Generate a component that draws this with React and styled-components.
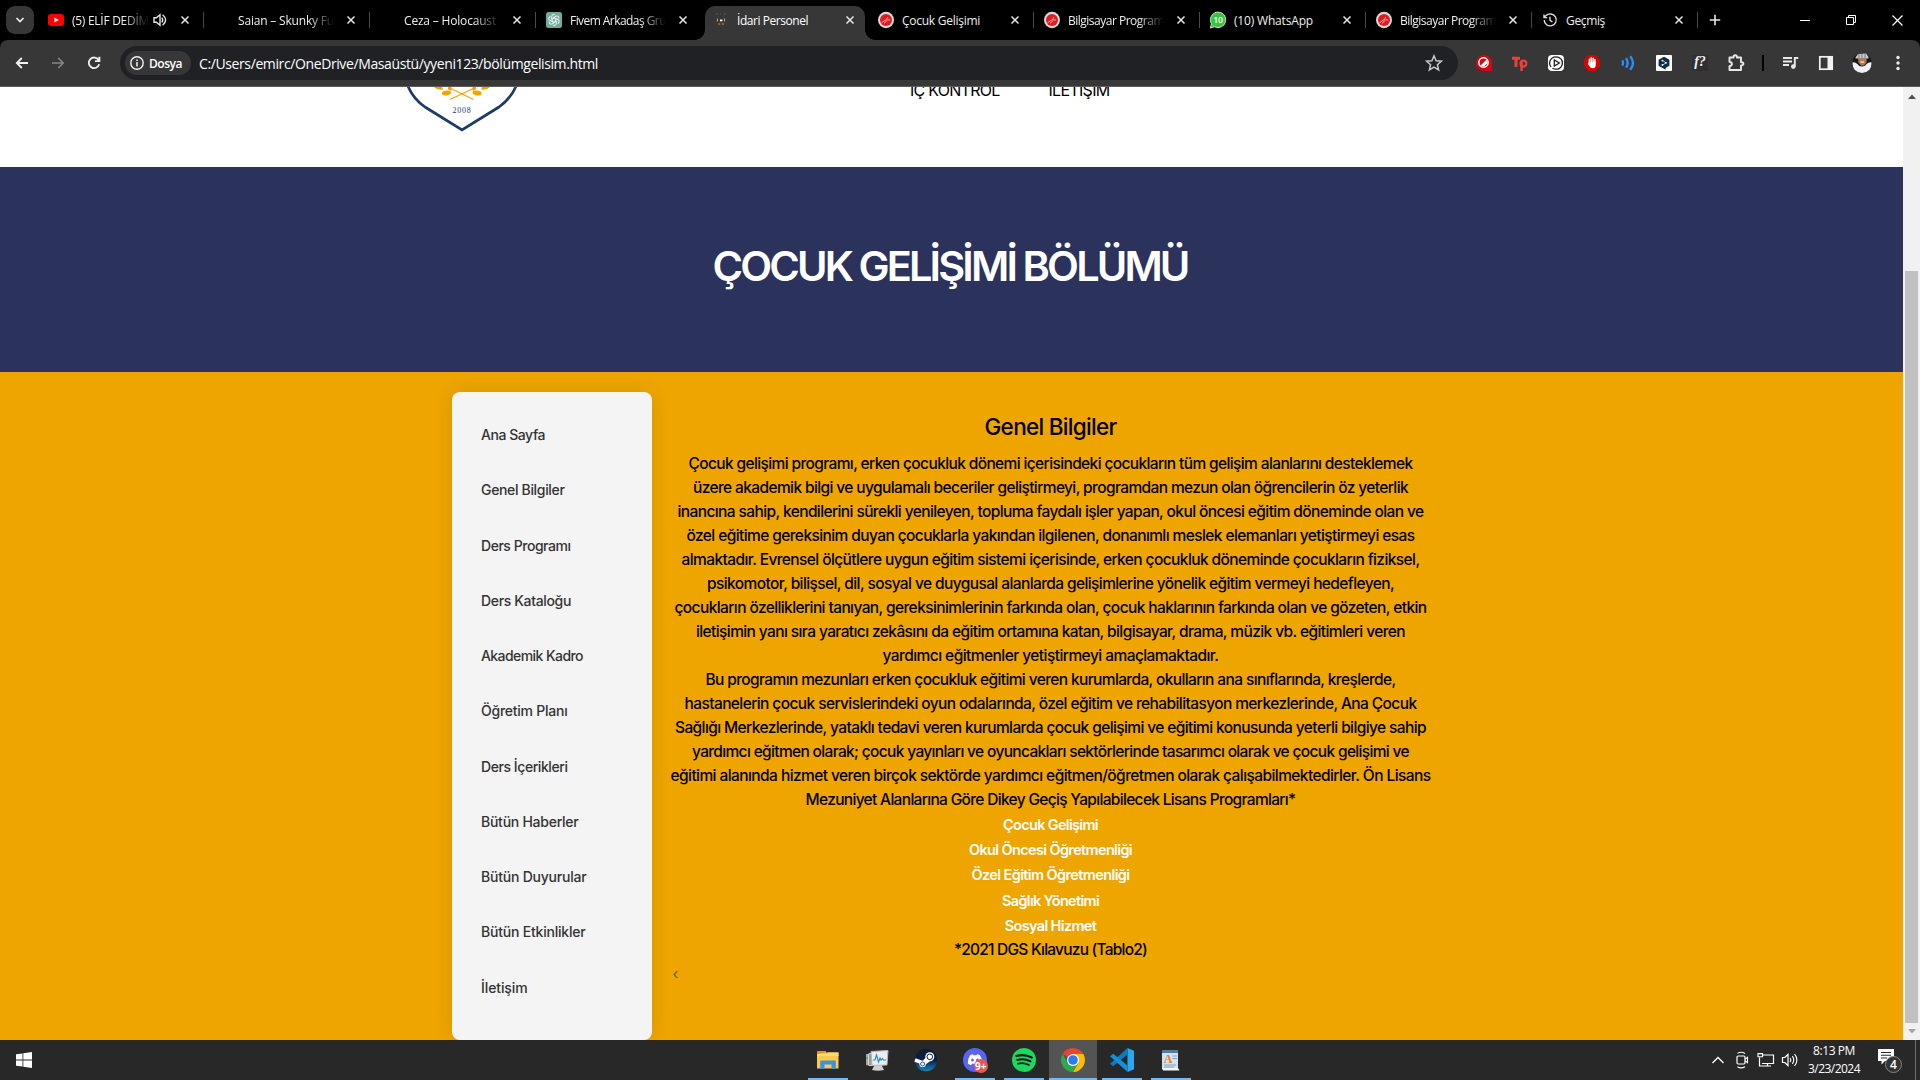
import React, { useLayoutEffect, useRef } from "react";
import styled, { createGlobalStyle, css } from "styled-components";

const ui = `"Open Sans", "Noto Sans", sans-serif`;
const body = `Inter, "Noto Sans", sans-serif`;

const Global = createGlobalStyle`
  * { box-sizing: border-box; }
  html, body { margin: 0; padding: 0; height: 100%; overflow: hidden; }
  body { font-family: ${ui}; background: #000; }
  svg { display: block; flex: none; }
`;

/* ---------- text that tracks itself to a given measure ---------- */
const FitSpan = styled.span`
  display: block;
  flex: none;
  width: max-content;
  white-space: nowrap;
`;

function Fit({ w, children }) {
  const ref = useRef(null);
  useLayoutEffect(() => {
    const el = ref.current;
    el.style.letterSpacing = "0px";
    const natural = el.getBoundingClientRect().width;
    el.style.letterSpacing = `${(w - natural) / el.textContent.length}px`;
  }, [w, children]);
  return <FitSpan ref={ref}>{children}</FitSpan>;
}

/* ---------- window ---------- */
const Window = styled.div`
  width: 1920px;
  height: 1080px;
  display: flex;
  flex-direction: column;
  overflow: hidden;
`;

const TabStrip = styled.div`
  height: 40px;
  flex: none;
  display: flex;
  background: #000;
  color: #e8e8e8;
`;

const TabSearch = styled.div`
  width: 28px;
  height: 28px;
  margin: 6px 4px 0 6px;
  border-radius: 9px;
  background: #373737;
  display: grid;
  place-items: center;
`;

const TabBox = styled.div`
  width: 166px;
  height: 40px;
  display: flex;
  align-items: center;
  padding: 0 0 0 10px;
  font-size: 12px;
  color: #efefef;
  ${(p) =>
    p.$active &&
    css`
      position: relative;
      width: 160px;
      height: 34px;
      margin: 6px 3px 0;
      padding: 0 0 6px 8px;
      background: #373737;
      border-radius: 10px 10px 0 0;
      color: #fff;
      &::before,
      &::after {
        content: "";
        position: absolute;
        bottom: 0;
        width: 10px;
        height: 10px;
      }
      &::before {
        left: -10px;
        background: radial-gradient(circle at 0 0, transparent 9.5px, #373737 10px);
      }
      &::after {
        right: -10px;
        background: radial-gradient(circle at 100% 0, transparent 9.5px, #373737 10px);
      }
    `}
`;

const Favicon = styled.div`
  width: 16px;
  height: 18px;
  display: grid;
  place-items: center;
  margin-right: 8px;
  flex: none;
`;

const TabLabel = styled.div`
  width: ${(p) => (p.$short ? 77 : 96)}px;
  flex: none;
  overflow: hidden;
  line-height: 20px;
  padding-top: 1px;
  ${(p) =>
    p.$fade && css`mask-image: linear-gradient(90deg, #000 calc(100% - 26px), transparent 100%);`}
`;

const SoundSlot = styled.div`
  width: 19px;
  display: grid;
  place-items: center;
  padding-left: 3px;
`;

const CloseSlot = styled.div`
  width: 16px;
  flex: none;
  margin: 0 10px 0 9px;
  display: grid;
  place-items: center;
`;

const Separator = styled.div`
  width: 1px;
  height: 16px;
  background: ${(p) => (p.$hidden ? "transparent" : "#4a4a4a")};
`;

const NewTab = styled.div`
  width: 34px;
  display: grid;
  place-items: center;
`;

const WindowControls = styled.div`
  margin-left: auto;
  display: flex;
`;

const ControlButton = styled.div`
  width: 46px;
  height: 40px;
  display: grid;
  place-items: center;
`;

const Toolbar = styled.div`
  height: 47px;
  flex: none;
  display: flex;
  align-items: center;
  padding-left: 4px;
  background: #373737;
  border-bottom: 1px solid #5c5c5c;
  border-radius: 8px 8px 0 0;
`;

const NavButton = styled.div`
  width: 36px;
  display: grid;
  place-items: center;
`;

const Omnibox = styled.div`
  width: 1338px;
  height: 34px;
  margin-left: 8px;
  padding: 0 15px 0 5px;
  border-radius: 17px;
  background: #202124;
  color: #fff;
  display: flex;
  align-items: center;
  font-size: 14px;
`;

const Chip = styled.div`
  width: 66px;
  height: 24px;
  margin-right: 8px;
  padding-left: 5px;
  gap: 5px;
  border-radius: 12px;
  background: #373737;
  display: flex;
  align-items: center;
  font-size: 12px;
  font-weight: 600;
`;

const StarSlot = styled.div`
  margin-left: auto;
`;

const Extensions = styled.div`
  display: flex;
  align-items: center;
  margin-left: 8px;
`;

const Extension = styled.div`
  width: 36px;
  height: 24px;
  display: grid;
  place-items: center;
`;

const ToolbarDivider = styled.div`
  width: 2px;
  height: 16px;
  margin: 0 8px 0 8px;
  background: #000;
`;

/* ---------- page ---------- */
const Viewport = styled.div`
  height: 953px;
  flex: none;
  display: flex;
`;

const Page = styled.div`
  width: 1903px;
  font-family: ${body};
  background: #eea500;
  display: flex;
  flex-direction: column;
`;

const SiteHeader = styled.header`
  height: 80px;
  flex: none;
  overflow: hidden;
  background: #fff;
  display: flex;
  padding-left: 406px;
`;

const SiteNav = styled.nav`
  display: flex;
  align-items: center;
  gap: 49px;
  height: 24px;
  margin: -9px 0 0 392px;
  font-size: 16px;
  line-height: 24px;
  color: #000;
`;

const Banner = styled.section`
  height: 205px;
  flex: none;
  background: #2b325c;
  display: flex;
  align-items: center;
  justify-content: center;
  padding: 0 3px 7px 0;
`;

const BannerTitle = styled.h1`
  margin: 0;
  font-size: 41.5px;
  font-weight: 600;
  line-height: 50px;
  color: #fff;
`;

const Content = styled.div`
  width: 1000px;
  flex: 1;
  margin: 0 auto;
  display: flex;
`;

const Sidebar = styled.aside`
  width: 200px;
  height: 648px;
  flex: none;
  margin-top: 20px;
  padding: 15px 0 0 29.5px;
  border-radius: 8px;
  background: #f4f4f4;
  box-shadow: 0 0 20px rgba(0, 0, 0, 0.1);
`;

const SideLink = styled.a`
  height: 55.25px;
  display: flex;
  align-items: center;
  font-size: 14px;
  font-weight: 450;
  color: #333;
`;

const Article = styled.main`
  width: 800px;
  padding: 40px 21px 0 19px;
  display: flex;
  flex-direction: column;
  align-items: center;
`;

const ArticleTitle = styled.h2`
  margin: 0 0 11px;
  font-size: 22.5px;
  line-height: 29px;
  font-weight: 500;
  color: #000;
`;

const Line = styled.div`
  height: 24px;
  font-size: 15.5px;
  font-weight: 450;
  line-height: 24px;
  color: #000;
`;

const Program = styled.div`
  height: 25.2px;
  font-size: 14.5px;
  line-height: 25.2px;
  font-weight: 600;
  color: #fff;
`;

const PrevMark = styled.div`
  align-self: flex-start;
  margin: 1px 0 0 2px;
  font-size: 15px;
  line-height: 22px;
  color: #6b6250;
`;

const Scrollbar = styled.div`
  width: 17px;
  background: #f1f1f1;
  display: flex;
  flex-direction: column;
  align-items: center;
  padding: 7px 0 6px;
`;

const Thumb = styled.div`
  width: 13px;
  height: 752px;
  margin-top: 172px;
  margin-bottom: auto;
  background: #c1c1c1;
`;

/* ---------- taskbar ---------- */
const Taskbar = styled.div`
  height: 40px;
  flex: none;
  display: flex;
  background: #282828;
  color: #fff;
`;

const StartButton = styled.div`
  width: 48px;
  display: grid;
  place-items: center;
  margin-right: 756px;
`;

const AppSlot = styled.div`
  width: 48px;
  margin-right: 1px;
  display: flex;
  flex-direction: column;
  align-items: center;
  justify-content: space-between;
  padding-top: 8px;
  background: ${(p) => (p.$active ? "#545454" : "transparent")};
`;

const Underline = styled.div`
  width: ${(p) => (p.$state === "active" ? 48 : 40)}px;
  height: 2px;
  background: ${(p) => (p.$state ? "#76b9ed" : "transparent")};
`;

const Tray = styled.div`
  margin-left: auto;
  display: flex;
  align-items: center;
`;

const TrayIcon = styled.div`
  width: 24px;
  display: grid;
  place-items: center;
`;

const Clock = styled.div`
  width: 64px;
  display: flex;
  flex-direction: column;
  align-items: center;
  font-size: 12px;
  line-height: 18px;
`;

const Notifications = styled.div`
  width: 49px;
  padding: 2px 0 0 11px;
`;

const ShowDesktop = styled.div`
  width: 5px;
  height: 40px;
  border-left: 1px solid #6d6d6d;
`;

/* ---------- icons ---------- */
const Svg = ({ s = 16, w, h, v, children }) => (
  <svg width={w || s} height={h || s} viewBox={v || `0 0 ${w || s} ${h || s}`} fill="none">
    {children}
  </svg>
);

const CloseX = () => (
  <Svg s={10}>
    <path d="M1.5 1.5l7 7M8.5 1.5l-7 7" stroke="#e6e6e6" strokeWidth="1.5" />
  </Svg>
);

const YouTube = () => (
  <Svg w={16} h={12}>
    <rect width="16" height="12" rx="3" fill="#f00" />
    <path d="M6.4 3.4v5.2L10.8 6z" fill="#fff" />
  </Svg>
);

const ChatGpt = () => (
  <Svg s={16}>
    <rect width="16" height="16" rx="2.5" fill="#74aa9c" />
    {[0, 60, 120, 180, 240, 300].map((a) => (
      <path
        key={a}
        d="M8 5.9L5.7 7.2V4.3C5.7 2.6 8 1.9 9.2 3.1"
        stroke="#fff"
        strokeWidth="0.9"
        transform={`rotate(${a} 8 8)`}
      />
    ))}
  </Svg>
);

const Crest = () => (
  <Svg s={16}>
    <path d="M3 2h2M7 2h1M11 2h2" stroke="#3a6ca8" strokeWidth=".8" />
    <path d="M4 4h1.5M10 4h1.500" stroke="#28415f" />
    <path d="M4.500 6.500v3M11.500 6.500v3" stroke="#f0a21a" strokeWidth="1" />
    <path d="M7 8.400h2.400" stroke="#fff" strokeWidth="1.800" />
    <path d="M5.400 12h1.800M8.800 12h2" stroke="#f0a21a" strokeWidth="1.200" />
    <path d="M2.500 8v2M13.500 8v2M7 14h2" stroke="#28415f" />
  </Svg>
);

const RedSeal = () => (
  <Svg w={16} h={18}>
    <ellipse cx="8" cy="9" rx="8" ry="8.200" fill="#d9d9d9" />
    <circle cx="8" cy="9" r="6" fill="#e01b22" />
    <path d="M3.6 11.6l5-3.2 1.2-2.2M6 12.4l3.8-3.6 2.4.2" stroke="#fff" strokeOpacity=".75" strokeWidth=".8" />
  </Svg>
);

const BadgeText = styled.text`
  font-family: ${ui};
  font-weight: ${(p) => p.$weight || 600};
  font-size: ${(p) => p.$size}px;
  text-anchor: middle;
  fill: #fff;
`;

const WhatsApp = () => (
  <Svg w={16} h={18}>
    <path d="M8 1a7.8 7.8 0 1 1-3.4 14.8L.4 17l1-4.2A7.9 7.9 0 0 1 8 1z" fill="#3bc43f" stroke="#eaffea" strokeWidth=".8" />
    <BadgeText x="8" y="12" $size={8.5}>10</BadgeText>
  </Svg>
);

const History = () => (
  <Svg s={16}>
    <path d="M2.2 8A6 6 0 1 0 4 3.6L2.2 5.4M2 2.4v3.2h3.2M8 4.8V8.4l2.4 1.4" stroke="#ddd" strokeWidth="1.4" />
  </Svg>
);

const Sound = () => (
  <Svg s={14}>
    <path d="M1 4.800h2.400L7 1.800v10.400l-3.600-3H1z" stroke="#e6e6e6" strokeWidth="1.400" />
    <path d="M8.800 4.600q1.800 2.400 0 4.800M9.600 1.800q6 5.200 0 10.400" stroke="#e6e6e6" strokeWidth="1.400" />
  </Svg>
);

const ShieldLogo = () => (
  <svg width="112" height="48" viewBox="406 87 112 48" fill="none">
    <path d="M407.500 85C411 94 417 101.500 425 107L462 130L499 107C507 101.500 513 94 516.500 85" stroke="#1e3a66" strokeWidth="2.700" />
    <path d="M450 99.500L467 91.500L473 88.500M473.500 99.500L457 91.500L451 88.500" stroke="#f0a500" strokeWidth="1.100" />
    <ellipse cx="446.500" cy="93" rx="4.600" ry="2.400" transform="rotate(-8 446.500 93)" fill="#f0a500" />
    <ellipse cx="477" cy="93" rx="4.600" ry="2.400" transform="rotate(8 477 93)" fill="#f0a500" />
    <path d="M434 87h8l1 2.500q-6 1-9-2.500zM448 87h3.500v3.500q-4 .5-3.500-3.500zM490 87h-8l-1 2.500q6 1 9-2.500zM476 87h-3.500v3.500q4 .5 3.500-3.500z" fill="#f0a500" />
    <text x="462" y="112.500" fontFamily="Liberation Serif, serif" fontSize="8" letterSpacing="0.8" textAnchor="middle" fill="#1e3a66">2008</text>
  </svg>
);

const ExtRed = () => (
  <Svg s={16}>
    <path d="M8 0a8 8 0 0 1 8 8v8H8A8 8 0 0 1 8 0z" fill="#d40511" />
    <circle cx="7.500" cy="7.500" r="5.400" fill="#fff" />
    <circle cx="7.500" cy="7.500" r="3.900" fill="#d40511" />
    <path d="M4.600 10.600L10.600 4.400 11.600 8 8 11.600z" fill="#fff" />
  </Svg>
);

const ExtTp = () => (
  <Svg w={18} h={16}>
    <path d="M1 3.200h8M5 3v9" stroke="#f23d3d" strokeWidth="3" />
    <path d="M10.600 16V7" stroke="#f23d3d" strokeWidth="2.500" />
    <circle cx="12.400" cy="8.600" r="2.900" stroke="#f23d3d" strokeWidth="2.200" />
  </Svg>
);

const ExtPlay = () => (
  <Svg s={16}>
    <rect width="16" height="16" rx="4" fill="#fff" />
    <path d="M3 12A6.300 6.300 0 0 1 8 1.800q3 0 4.800 2M13 4a6.300 6.300 0 0 1-5 10.200q-2 0-3.600-1" stroke="#222" strokeWidth="1.300" />
    <path d="M6.300 5v6l5-3z" stroke="#222" strokeWidth="1.300" />
  </Svg>
);

const ExtHand = () => (
  <Svg s={16}>
    <path d="M4.700 0h6.600L16 4.700v6.600L11.300 16H4.700L0 11.300V4.700z" fill="#d90000" />
    <path d="M5.400 8V4.300M7.200 7V2.800M9.100 7V3.200M10.900 8V4.600" stroke="#fff" strokeWidth="1.500" strokeLinecap="round" />
    <path d="M4.700 7h7v3.200q0 3-3.200 3-1.600 0-2.400-1.300L3.800 9z" fill="#fff" />
  </Svg>
);

const ExtWaves = () => (
  <Svg w={14} h={16}>
    <path d="M1.200 5.500q1.800 2.400 0 5M5 3.300q3.400 4.600 0 9.400M9.200 1.200q5.600 6.800 0 13.600" stroke="#2f8cff" strokeWidth="2.300" />
  </Svg>
);

const ExtHex = () => (
  <Svg s={16}>
    <rect width="16" height="16" rx="1" fill="#fff" />
    <path d="M8 1.800l5.400 3v6L9.600 13v1.800L6.400 13l-3.800-2.200v-6z" fill="#0f2b46" />
    <path d="M6.400 5.400l3.600 2.400-3.600 2.400" stroke="#fff" strokeWidth=".7" />
    <circle cx="6.400" cy="5.600" r=".9" fill="#fff" />
    <circle cx="10" cy="7.800" r=".9" fill="#fff" />
    <circle cx="6.400" cy="10" r=".9" fill="#fff" />
  </Svg>
);

const ExtFont = styled.span`
  width: 16px;
  height: 16px;
  background: #303030;
  color: #f2f2f2;
  font: italic bold 14px/14px "Liberation Serif", serif;
  text-align: center;
  white-space: nowrap;
`;

const Puzzle = () => (
  <Svg s={18}>
    <path d="M2.500 3.500h4V3a1.700 1.700 0 0 1 3.400 0v.5H14v4.700h.8a1.600 1.600 0 0 1 0 3.200H14V16H2.500v-3.800q2.400-.4 2.400-2.200t-2.400-2.200z" stroke="#e8e8e8" strokeWidth="1.900" strokeLinejoin="round" />
  </Svg>
);

const MusicQueue = () => (
  <Svg w={18} h={14}>
    <path d="M2 2h9M2 5.500h9M2 9h6" stroke="#e8e8e8" strokeWidth="1.800" />
    <path d="M13.800 10.500V2h3.400" stroke="#e8e8e8" strokeWidth="1.900" />
    <circle cx="12.300" cy="10.600" r="2.300" fill="#e8e8e8" />
  </Svg>
);

const SidePanel = () => (
  <Svg w={16} h={16}>
    <rect x="1.800" y="1.800" width="12.400" height="12.400" stroke="#f2f2f2" strokeWidth="1.700" />
    <path d="M9.500 1.500H15v13H9.500z" fill="#f2f2f2" />
  </Svg>
);

const Avatar = () => (
  <Svg s={20}>
    <circle cx="10" cy="10" r="9.800" fill="#171719" />
    <path d="M.4 9.500q2.500-.8 5 1.500 1.500 2.500 4.600 2.500t4.600-2.500q2.500-2.300 5-1.500 0 10-9.600 10.400Q.6 19.500.4 9.500z" fill="#edf0fa" />
    <path d="M6 5.500h8.500v4L12 12.500H9L6.500 9.500z" fill="#b87753" />
    <path d="M3.500 4.500L6 1l8-.4L16.500 4v1.500h-13z" fill="#ccc" />
    <path d="M7 1v4M10 1v4M13 1v4" stroke="#777" />
    <path d="M8.500 9h3.500" stroke="#fff" />
  </Svg>
);

const Dots = () => (
  <Svg w={4} h={16}>
    <circle cx="2" cy="2.500" r="1.700" fill="#eee" />
    <circle cx="2" cy="8" r="1.700" fill="#eee" />
    <circle cx="2" cy="13.500" r="1.700" fill="#eee" />
  </Svg>
);

const Explorer = () => (
  <Svg s={24}>
    <path d="M1 3h9v4H1z" fill="#d99a10" />
    <path d="M1 6l9-1.500h12.500V20.500H1z" fill="#fcc94a" />
    <path d="M1 6h9.500L12 4.500h10.500V8H1z" fill="#ffd96b" />
    <path d="M5 12.500h14q.8 0 .8.800V21h-4.300v-4.500h-7V21H4.200v-7.700q0-.8.800-.8z" fill="#3895dd" />
  </Svg>
);

const PerfMon = () => (
  <Svg s={24}>
    <path d="M1 6l5 0v12l-5-1z" fill="#a6a6a6" />
    <path d="M1.500 9h2v2h-2z" fill="#3fb23f" />
    <rect x="3.500" y="5.500" width="14" height="12" rx="1" fill="#999" stroke="#ddd" />
    <path d="M6 3.500l17-1-1 14.500-15 .5z" fill="#e8edf0" stroke="#b5b5b5" />
    <path d="M8 12h2l1.500-5 2 7 1.500-4 1 2 1.500-1.500 1 1.500H21" stroke="#2b86b8" strokeWidth="1.100" />
    <path d="M9 18h8l2 4q-6 1.500-12 0z" fill="#cfcfcf" />
  </Svg>
);

const Steam = () => (
  <Svg s={24}>
    <defs>
      <linearGradient id="steam" x1="0" y1="0" x2="0" y2="1">
        <stop stopColor="#111d2e" />
        <stop offset=".5" stopColor="#0a1b48" />
        <stop offset="1" stopColor="#1387b8" />
      </linearGradient>
    </defs>
    <circle cx="12" cy="12" r="11.200" fill="url(#steam)" />
    <path d="M1 12l8 3 5-5M9 16l7-5" stroke="#fff" strokeWidth="3.600" />
    <circle cx="15.800" cy="8.800" r="4.500" fill="#fff" />
    <circle cx="15.800" cy="8.800" r="2.800" fill="#fff" stroke="#0a1b48" strokeWidth="1" />
    <circle cx="8.600" cy="16" r="3.200" fill="#fff" />
    <circle cx="8.600" cy="16" r="2" stroke="#0b3a69" strokeWidth=".9" />
  </Svg>
);

const Discord = () => (
  <Svg w={26} h={26}>
    <circle cx="13" cy="12" r="12" fill="#5865f2" />
    <path d="M8 7.200q1.800-.9 3-1l.6 1.100h2.800l.6-1.100q1.700.2 3 1 2.600 4 2.200 8.400-1.600 1.300-3.300 1.700l-.9-1.600H10l-.9 1.600q-1.700-.4-3.300-1.700Q5.400 11.200 8 7.200z" fill="#fff" />
    <ellipse cx="10.500" cy="12" rx="1.400" ry="1.600" fill="#5865f2" />
    <ellipse cx="15.500" cy="12" rx="1.400" ry="1.600" fill="#5865f2" />
    <circle cx="19" cy="18" r="7" fill="#ed5555" />
    <BadgeText x="18.800" y="21.500" $size={10} $weight={700}>9+</BadgeText>
  </Svg>
);

const Spotify = () => (
  <Svg s={24}>
    <circle cx="12" cy="12" r="12" fill="#1ed760" />
    <path d="M4.500 8Q12 5.600 19.800 9.500" stroke="#111" strokeWidth="2.300" strokeLinecap="round" />
    <path d="M5.200 12Q12 10 18.500 13.400" stroke="#111" strokeWidth="2" strokeLinecap="round" />
    <path d="M5.800 15.700Q11.500 14 17 17" stroke="#111" strokeWidth="1.600" strokeLinecap="round" />
  </Svg>
);

const Chrome = () => (
  <Svg s={24}>
    <path d="M12 12L1.610 6A12 12 0 0 1 22.390 6z" fill="#ea4335" />
    <path d="M12 6H22.390A12 12 0 0 1 12 24L17.200 15z" fill="#fbbc05" />
    <path d="M1.610 6L6.800 15L12 12L17.200 15L12 24A12 12 0 0 1 1.610 6z" fill="#2da94f" />
    <circle cx="12" cy="12" r="6" fill="#fff" />
    <circle cx="12" cy="12" r="4.800" fill="#2a7cf0" />
  </Svg>
);

const VsCode = () => (
  <Svg s={24}>
    <path d="M17.500 0L24 2.800v18.400L17.500 24z" fill="#29a9f2" />
    <path d="M17.500 0v6.500L3.200 18.200 0 15.800 17.500 0z" fill="#0f79bf" />
    <path d="M17.500 24v-6.500L3.200 5.800 0 8.200 17.500 24z" fill="#168fd6" />
  </Svg>
);

const WordPad = () => (
  <Svg s={24}>
    <path d="M3 2h16v19H3z" fill="#d0e2f2" />
    <path d="M3 2h16v3H3z" fill="#517da5" />
    <text x="9" y="14.500" fontFamily="Liberation Serif, serif" fontSize="12" fontWeight="bold" textAnchor="middle" fill="#ec7b21">A</text>
    <path d="M13.500 8H18M13.500 10.500H18M5 17h12M5 19h10" stroke="#7da3cb" />
    <path d="M3 20h16l1.500 2.500H4z" fill="#f4f4f4" />
  </Svg>
);

const WindowsLogo = () => (
  <Svg s={16}>
    <path d="M0 2.300l6.500-.9v6.200H0zM7.300 1.300L16 0v7.600H7.300zM0 8.400h6.500v6.200L0 13.700zM7.300 8.400H16V16l-8.700-1.300z" fill="#fff" />
  </Svg>
);

const Chevron = () => (
  <Svg w={14} h={8}>
    <path d="M1.500 7L7 1.500 12.500 7" stroke="#fff" strokeWidth="1.300" />
  </Svg>
);

const MeetNow = () => (
  <Svg w={14} h={18}>
    <rect x="2" y="5" width="8" height="8" rx="1.200" stroke="#fff" strokeWidth="1.200" />
    <path d="M10 8.200l2.500-1.800v5.200L10 9.800M2.500 2.400q3.500-2.200 7.500 0M2.500 15.800q3.500 2.200 7.500 0" stroke="#fff" strokeWidth="1.100" />
  </Svg>
);

const Network = () => (
  <Svg w={18} h={16}>
    <path d="M5 3h11.500v8.500H5M2.500 5.500V14h9M10.500 11.500V14M7 14h7" stroke="#fff" strokeWidth="1.200" />
    <path d="M1 1.600h4.500v3.200H1z" stroke="#fff" strokeWidth="1.100" />
  </Svg>
);

const Volume = () => (
  <Svg w={18} h={16}>
    <path d="M1.500 5.500h2.300L7 2.500v11l-3.200-3H1.500z" stroke="#fff" strokeWidth="1.200" />
    <path d="M9 6q1.500 2 0 4M11.300 4.200q3 3.800 0 7.600M13.600 2.200q4.600 5.800 0 11.600" stroke="#fff" strokeWidth="1.100" />
  </Svg>
);

const ActionCenter = () => (
  <Svg w={26} h={26}>
    <path d="M1 1h16v12H8l-3.500 3.500V13H1z" fill="#fff" />
    <path d="M4 4.500h10M4 7.200h10M4 10h6" stroke="#282828" strokeWidth="1.100" />
    <circle cx="16.500" cy="16.500" r="8" fill="#333" stroke="#858585" />
    <BadgeText x="16.500" y="20.500" $size={12}>4</BadgeText>
  </Svg>
);

/* ---------- data ---------- */
const tabs = [
  { icon: <YouTube />, label: "(5) ELİF DEDİM", w: 77, fade: true, sound: true },
  { icon: null, label: "Saian – Skunky Fu", w: 96, fade: true },
  { icon: null, label: "Ceza – Holocaust", w: 92, fade: true },
  { icon: <ChatGpt />, label: "Fivem Arkadaş Gru", w: 96, fade: true, hideSep: true },
  { icon: <Crest />, label: "İdari Personel", w: 71, active: true },
  { icon: <RedSeal />, label: "Çocuk Gelişimi", w: 78 },
  { icon: <RedSeal />, label: "Bilgisayar Program", w: 96, fade: true },
  { icon: <WhatsApp />, label: "(10) WhatsApp", w: 79 },
  { icon: <RedSeal />, label: "Bilgisayar Program", w: 96, fade: true },
  { icon: <History />, label: "Geçmiş", w: 39 },
];

const sideLinks = [
  ["Ana Sayfa", 64.5],
  ["Genel Bilgiler", 84],
  ["Ders Programı", 90],
  ["Ders Kataloğu", 90.5],
  ["Akademik Kadro", 102.5],
  ["Öğretim Planı", 87],
  ["Ders İçerikleri", 87],
  ["Bütün Haberler", 98],
  ["Bütün Duyurular", 106],
  ["Bütün Etkinlikler", 105],
  ["İletişim", 47],
];

const lines = [
  ["Çocuk gelişimi programı, erken çocukluk dönemi içerisindeki çocukların tüm gelişim alanlarını desteklemek", 724],
  ["üzere akademik bilgi ve uygulamalı beceriler geliştirmeyi, programdan mezun olan öğrencilerin öz yeterlik", 715],
  ["inancına sahip, kendilerini sürekli yenileyen, topluma faydalı işler yapan, okul öncesi eğitim döneminde olan ve", 746],
  ["özel eğitime gereksinim duyan çocuklarla yakından ilgilenen, donanımlı meslek elemanları yetiştirmeyi esas", 728],
  ["almaktadır. Evrensel ölçütlere uygun eğitim sistemi içerisinde, erken çocukluk döneminde çocukların fiziksel,", 738],
  ["psikomotor, bilişsel, dil, sosyal ve duygusal alanlarda gelişimlerine yönelik eğitim vermeyi hedefleyen,", 687],
  ["çocukların özelliklerini tanıyan, gereksinimlerinin farkında olan, çocuk haklarının farkında olan ve gözeten, etkin", 752],
  ["iletişimin yanı sıra yaratıcı zekâsını da eğitim ortamına katan, bilgisayar, drama, müzik vb. eğitimleri veren", 709],
  ["yardımcı eğitmenler yetiştirmeyi amaçlamaktadır.", 336],
  ["Bu programın mezunları erken çocukluk eğitimi veren kurumlarda, okulların ana sınıflarında, kreşlerde,", 690],
  ["hastanelerin çocuk servislerindeki oyun odalarında, özel eğitim ve rehabilitasyon merkezlerinde, Ana Çocuk", 732],
  ["Sağlığı Merkezlerinde, yataklı tedavi veren kurumlarda çocuk gelişimi ve eğitimi konusunda yeterli bilgiye sahip", 751],
  ["yardımcı eğitmen olarak; çocuk yayınları ve oyuncakları sektörlerinde tasarımcı olarak ve çocuk gelişimi ve", 717],
  ["eğitimi alanında hizmet veren birçok sektörde yardımcı eğitmen/öğretmen olarak çalışabilmektedirler. Ön Lisans", 760],
  ["Mezuniyet Alanlarına Göre Dikey Geçiş Yapılabilecek Lisans Programları*", 490],
];

const programs = [
  ["Çocuk Gelişimi", 95],
  ["Okul Öncesi Öğretmenliği", 163],
  ["Özel Eğitim Öğretmenliği", 158],
  ["Sağlık Yönetimi", 97],
  ["Sosyal Hizmet", 91.5],
];

const extensions = [
  <ExtRed />, <ExtTp />, <ExtPlay />, <ExtHand />, <ExtWaves />, <ExtHex />,
  <ExtFont>f?</ExtFont>, <Puzzle />,
];

const apps = [
  [<Explorer />, "open"],
  [<PerfMon />, ""],
  [<Steam />, ""],
  [<Discord />, "open"],
  [<Spotify />, "open"],
  [<Chrome />, "active"],
  [<VsCode />, "open"],
  [<WordPad />, "open"],
];

function Tab({ tab }) {
  return (
    <TabBox $active={tab.active}>
      <Favicon>{tab.icon}</Favicon>
      <TabLabel $short={tab.sound} $fade={tab.fade}>
        <Fit w={tab.w}>{tab.label}</Fit>
      </TabLabel>
      {tab.sound && <SoundSlot><Sound /></SoundSlot>}
      <CloseSlot><CloseX /></CloseSlot>
      {!tab.active && <Separator $hidden={tab.hideSep} />}
    </TabBox>
  );
}

export default function App() {
  return (
    <Window>
      <Global />
      <TabStrip>
        <TabSearch>
          <Svg w={10} h={6}><path d="M1.500 1L5 4.500 8.500 1" stroke="#eee" strokeWidth="1.700" /></Svg>
        </TabSearch>
        {tabs.map((t, i) => <Tab key={i} tab={t} />)}
        <NewTab>
          <Svg s={12}><path d="M6 .8v10.400M.8 6h10.400" stroke="#e8e8e8" strokeWidth="1.600" /></Svg>
        </NewTab>
        <WindowControls>
          <ControlButton><Svg s={10}><path d="M0 5.500h10" stroke="#fff" /></Svg></ControlButton>
          <ControlButton>
            <Svg s={10}><path d="M.5 2.500h7v7h-7zM2.500 2.500v-2h7v7h-2" stroke="#fff" /></Svg>
          </ControlButton>
          <ControlButton><Svg s={11}><path d="M.5.5l10 10M10.500.5l-10 10" stroke="#fff" strokeWidth="1.200" /></Svg></ControlButton>
        </WindowControls>
      </TabStrip>

      <Toolbar>
        <NavButton>
          <Svg w={14} h={12}><path d="M13 6H2M6.800 1L1.800 6l5 5" stroke="#f2f2f2" strokeWidth="1.800" /></Svg>
        </NavButton>
        <NavButton>
          <Svg w={14} h={12}><path d="M1 6h11M7.200 1l5 5-5 5" stroke="#858585" strokeWidth="1.600" /></Svg>
        </NavButton>
        <NavButton>
          <Svg s={14}><path d="M11.600 4A5.300 5.300 0 1 0 12.200 8.300M12.400.8v4.400H8" stroke="#f2f2f2" strokeWidth="1.800" /></Svg>
        </NavButton>
        <Omnibox>
          <Chip>
            <Svg s={14}>
              <circle cx="7" cy="7" r="6.200" stroke="#f2f2f2" strokeWidth="1.400" />
              <path d="M7 6v4.500M7 3.500V5" stroke="#f2f2f2" strokeWidth="1.500" />
            </Svg>
            <Fit w={33}>Dosya</Fit>
          </Chip>
          <Fit w={399}>C:/Users/emirc/OneDrive/Masaüstü/yyeni123/bölümgelisim.html</Fit>
          <StarSlot>
            <Svg s={18}>
              <path d="M9 1.800l2.100 4.900 5.300.5-4 3.500 1.200 5.200L9 13.100l-4.600 2.800 1.200-5.200-4-3.500 5.300-.5z" stroke="#c7c7c7" strokeWidth="1.500" />
            </Svg>
          </StarSlot>
        </Omnibox>
        <Extensions>
          {extensions.map((e, i) => <Extension key={i}>{e}</Extension>)}
          <ToolbarDivider />
          <Extension><MusicQueue /></Extension>
          <Extension><SidePanel /></Extension>
          <Extension><Avatar /></Extension>
          <Extension><Dots /></Extension>
        </Extensions>
      </Toolbar>

      <Viewport>
        <Page>
          <SiteHeader>
            <ShieldLogo />
            <SiteNav>
              <Fit w={89.5}>İÇ KONTROL</Fit>
              <Fit w={61}>İLETİŞİM</Fit>
            </SiteNav>
          </SiteHeader>
          <Banner>
            <BannerTitle><Fit w={475}>ÇOCUK GELİŞİMİ BÖLÜMÜ</Fit></BannerTitle>
          </Banner>
          <Content>
            <Sidebar>
              {sideLinks.map(([t, w]) => <SideLink key={t}><Fit w={w - 0.5}>{t}</Fit></SideLink>)}
            </Sidebar>
            <Article>
              <ArticleTitle><Fit w={132}>Genel Bilgiler</Fit></ArticleTitle>
              {lines.map(([t, w]) => <Line key={t}><Fit w={w}>{t}</Fit></Line>)}
              {programs.map(([t, w]) => <Program key={t}><Fit w={w}>{t}</Fit></Program>)}
              <Line><Fit w={193}>*2021 DGS Kılavuzu (Tablo2)</Fit></Line>
              <PrevMark>‹</PrevMark>
            </Article>
          </Content>
        </Page>
        <Scrollbar>
          <Svg w={8} h={5}><path d="M0 5l4-4.500L8 5z" fill="#505050" /></Svg>
          <Thumb />
          <Svg w={8} h={5}><path d="M0 0l4 4.500L8 0z" fill="#a3a3a3" /></Svg>
        </Scrollbar>
      </Viewport>

      <Taskbar>
        <StartButton><WindowsLogo /></StartButton>
        {apps.map(([icon, state], i) => (
          <AppSlot key={i} $active={state === "active"}>
            {icon}
            <Underline $state={state} />
          </AppSlot>
        ))}
        <Tray>
          <TrayIcon><Chevron /></TrayIcon>
          <TrayIcon><MeetNow /></TrayIcon>
          <TrayIcon><Network /></TrayIcon>
          <TrayIcon><Volume /></TrayIcon>
          <Clock>
            <Fit w={42}>8:13 PM</Fit>
            <Fit w={52}>3/23/2024</Fit>
          </Clock>
          <Notifications><ActionCenter /></Notifications>
          <ShowDesktop />
        </Tray>
      </Taskbar>
    </Window>
  );
}
